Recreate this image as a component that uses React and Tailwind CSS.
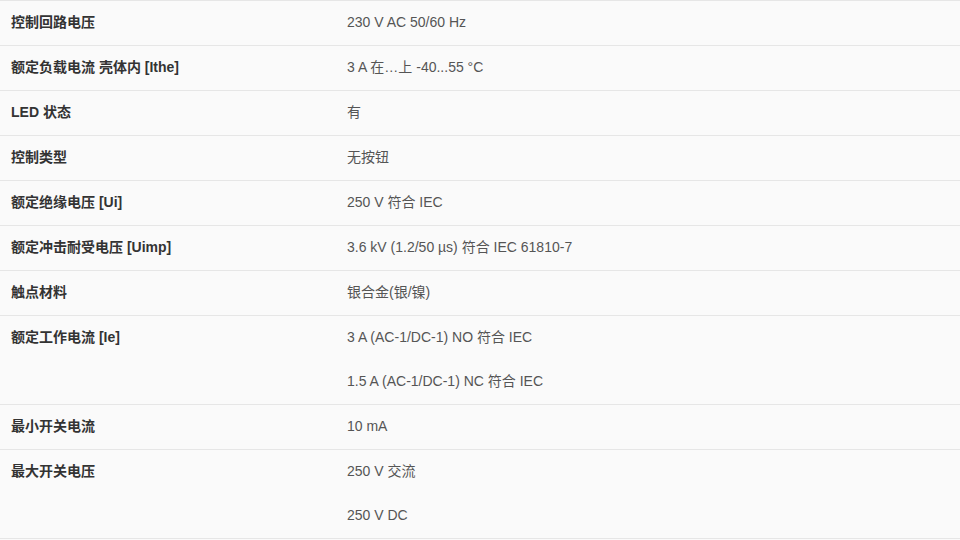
const rows = [
  { label: '控制回路电压', values: ['230 V AC 50/60 Hz'] },
  { label: '额定负载电流 壳体内 [Ithe]', values: ['3 A 在…上 -40...55 °C'] },
  { label: 'LED 状态', values: ['有'] },
  { label: '控制类型', values: ['无按钮'] },
  { label: '额定绝缘电压 [Ui]', values: ['250 V 符合 IEC'] },
  { label: '额定冲击耐受电压 [Uimp]', values: ['3.6 kV (1.2/50 µs) 符合 IEC 61810-7'] },
  { label: '触点材料', values: ['银合金(银/镍)'] },
  { label: '额定工作电流 [Ie]', values: ['3 A (AC-1/DC-1) NO 符合 IEC', '1.5 A (AC-1/DC-1) NC 符合 IEC'] },
  { label: '最小开关电流', values: ['10 mA'] },
  { label: '最大开关电压', values: ['250 V 交流', '250 V DC'] },
];

export default function App() {
  return (
    <div
      className="w-[960px] h-[540px] bg-[#fafafa] text-[14px]"
      style={{ fontFamily: '"Liberation Sans", Arial, "Noto Sans CJK SC", sans-serif' }}
    >
      <div className="border-t border-[#e6e6e6]">
        {rows.map((row) => (
          <div key={row.label} className="flex border-b border-[#e6e6e6]">
            <div className="w-[336px] shrink-0 px-[11px] leading-[42px] pb-[2px] font-bold text-[#333]">
              {row.label}
            </div>
            <div className="flex-1 px-[11px] text-[#555]">
              {row.values.map((v) => (
                <div key={v} className="leading-[42px] pb-[2px]">
                  {v}
                </div>
              ))}
            </div>
          </div>
        ))}
      </div>
    </div>
  );
}
